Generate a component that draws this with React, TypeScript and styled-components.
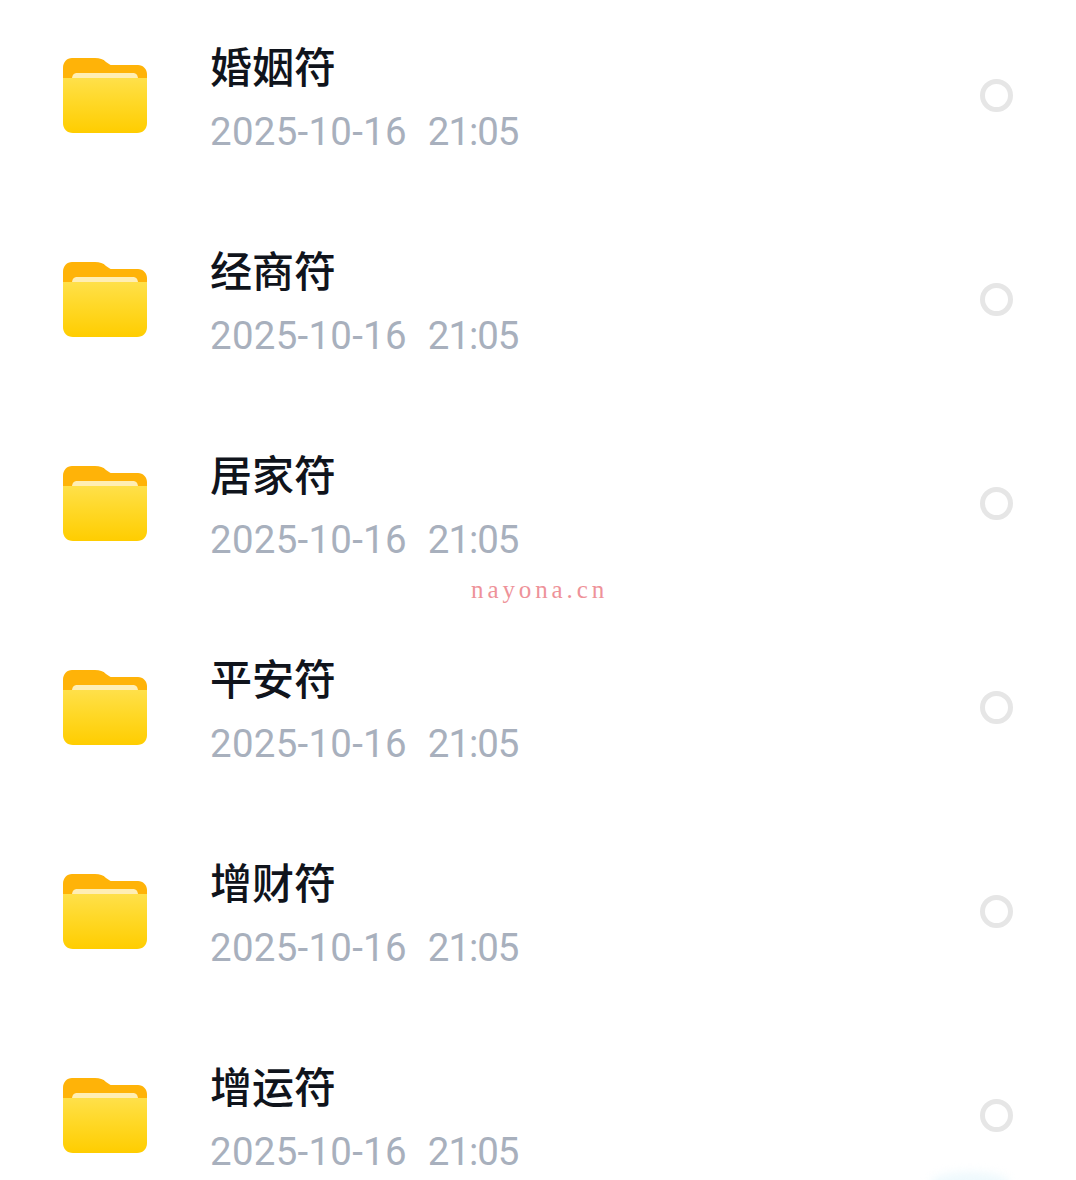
import { FC } from "react";
import styled, { createGlobalStyle } from "styled-components";

const GlobalStyle = createGlobalStyle`
    html, body {
        margin: 0;
        padding: 0;
        background: #ffffff;
    }
    body {
        height: 1180px;
        overflow: hidden;
    }
`
const Page = styled.main`
    position: relative;
    display: flex;
    flex-direction: column;
    width: 1076px;
    height: 1180px;
    overflow: hidden;
    background: #ffffff;
`
const Row = styled.section`
    display: flex;
    align-items: center;
    flex: 0 0 204px;
    padding: 0 63px 0 63px;
    box-sizing: border-box;
    height: 204px;
`
const FolderSlot = styled.div`
    display: flex;
    flex: 0 0 84px;
    margin-right: 64px;
    margin-top: -14px;
`
const Info = styled.div`
    display: flex;
    flex-direction: column;
    flex: 1;
    gap: 25px;
    margin-top: -7px;
`
const Title = styled.div`
    font-family: "Noto Sans CJK SC", sans-serif;
    font-size: 42px;
    font-weight: 500;
    line-height: 42px;
    margin-left: -1px;
    color: #10141c;
`
const Stamp = styled.div`
    display: flex;
    gap: 21px;
    font-family: Roboto, sans-serif;
    font-size: 38.4px;
    line-height: 42px;
    color: #a8b0bd;
    white-space: pre;
    margin-left: -1px;
`
const StampDate = styled.span`
    letter-spacing: 0.3px;
`
const StampTime = styled.span`
    letter-spacing: -1px;
`
const Radio = styled.div`
    width: 33px;
    height: 33px;
    box-sizing: border-box;
    border: 5px solid #e6e6e6;
    border-radius: 50%;
    margin-top: -14px;
`
const Watermark = styled.div`
    position: absolute;
    left: 471px;
    top: 577px;
    font-family: "Liberation Serif", serif;
    font-size: 25px;
    letter-spacing: 3.9px;
    line-height: 26px;
    color: #ee9299;
`
const Glow = styled.div`
    position: absolute;
    left: 930px;
    top: 1172px;
    width: 80px;
    height: 24px;
    border-radius: 50%;
    background: #eef9fd;
    filter: blur(5px);
`

const Folder: FC<{ id: string }> = ({ id }) => (
    <svg width="84" height="75" viewBox="0 0 84 75">
        <defs>
            <linearGradient id={`${id}-front`} x1="0" y1="0" x2="0" y2="1">
                <stop offset="0" stopColor="#ffe04a" />
                <stop offset="0.4" stopColor="#ffd92a" />
                <stop offset="1" stopColor="#ffcd00" />
            </linearGradient>
        </defs>
        <path
            d="M0 30V10C0 4 4 0 9 0H32C37 0 40 1 43 4L46 6C47 7 48 7 50 7H75C80 7 84 11 84 16V30Z"
            fill="#ffb308"
        />
        <path d="M9 21C9 17 11 15 14 15H70C73 15 75 17 75 21V28H9Z" fill="#ffeeb4" />
        <path
            d="M0 20H84V65C84 71 80 75 74 75H10C4 75 0 71 0 65Z"
            fill={`url(#${id}-front)`}
        />
    </svg>
);

const folders = ["婚姻符", "经商符", "居家符", "平安符", "增财符", "增运符"];

const App: FC = () => {
    return (
        <Page>
            <GlobalStyle />
            {folders.map((name, i) => (
                <Row key={name}>
                    <FolderSlot>
                        <Folder id={`folder-${i}`} />
                    </FolderSlot>
                    <Info>
                        <Title>{name}</Title>
                        <Stamp>
                            <StampDate>2025-10-16</StampDate>
                            <StampTime>21:05</StampTime>
                        </Stamp>
                    </Info>
                    <Radio />
                </Row>
            ))}
            <Watermark>nayona.cn</Watermark>
            <Glow />
        </Page>
    )
}

export default App;
